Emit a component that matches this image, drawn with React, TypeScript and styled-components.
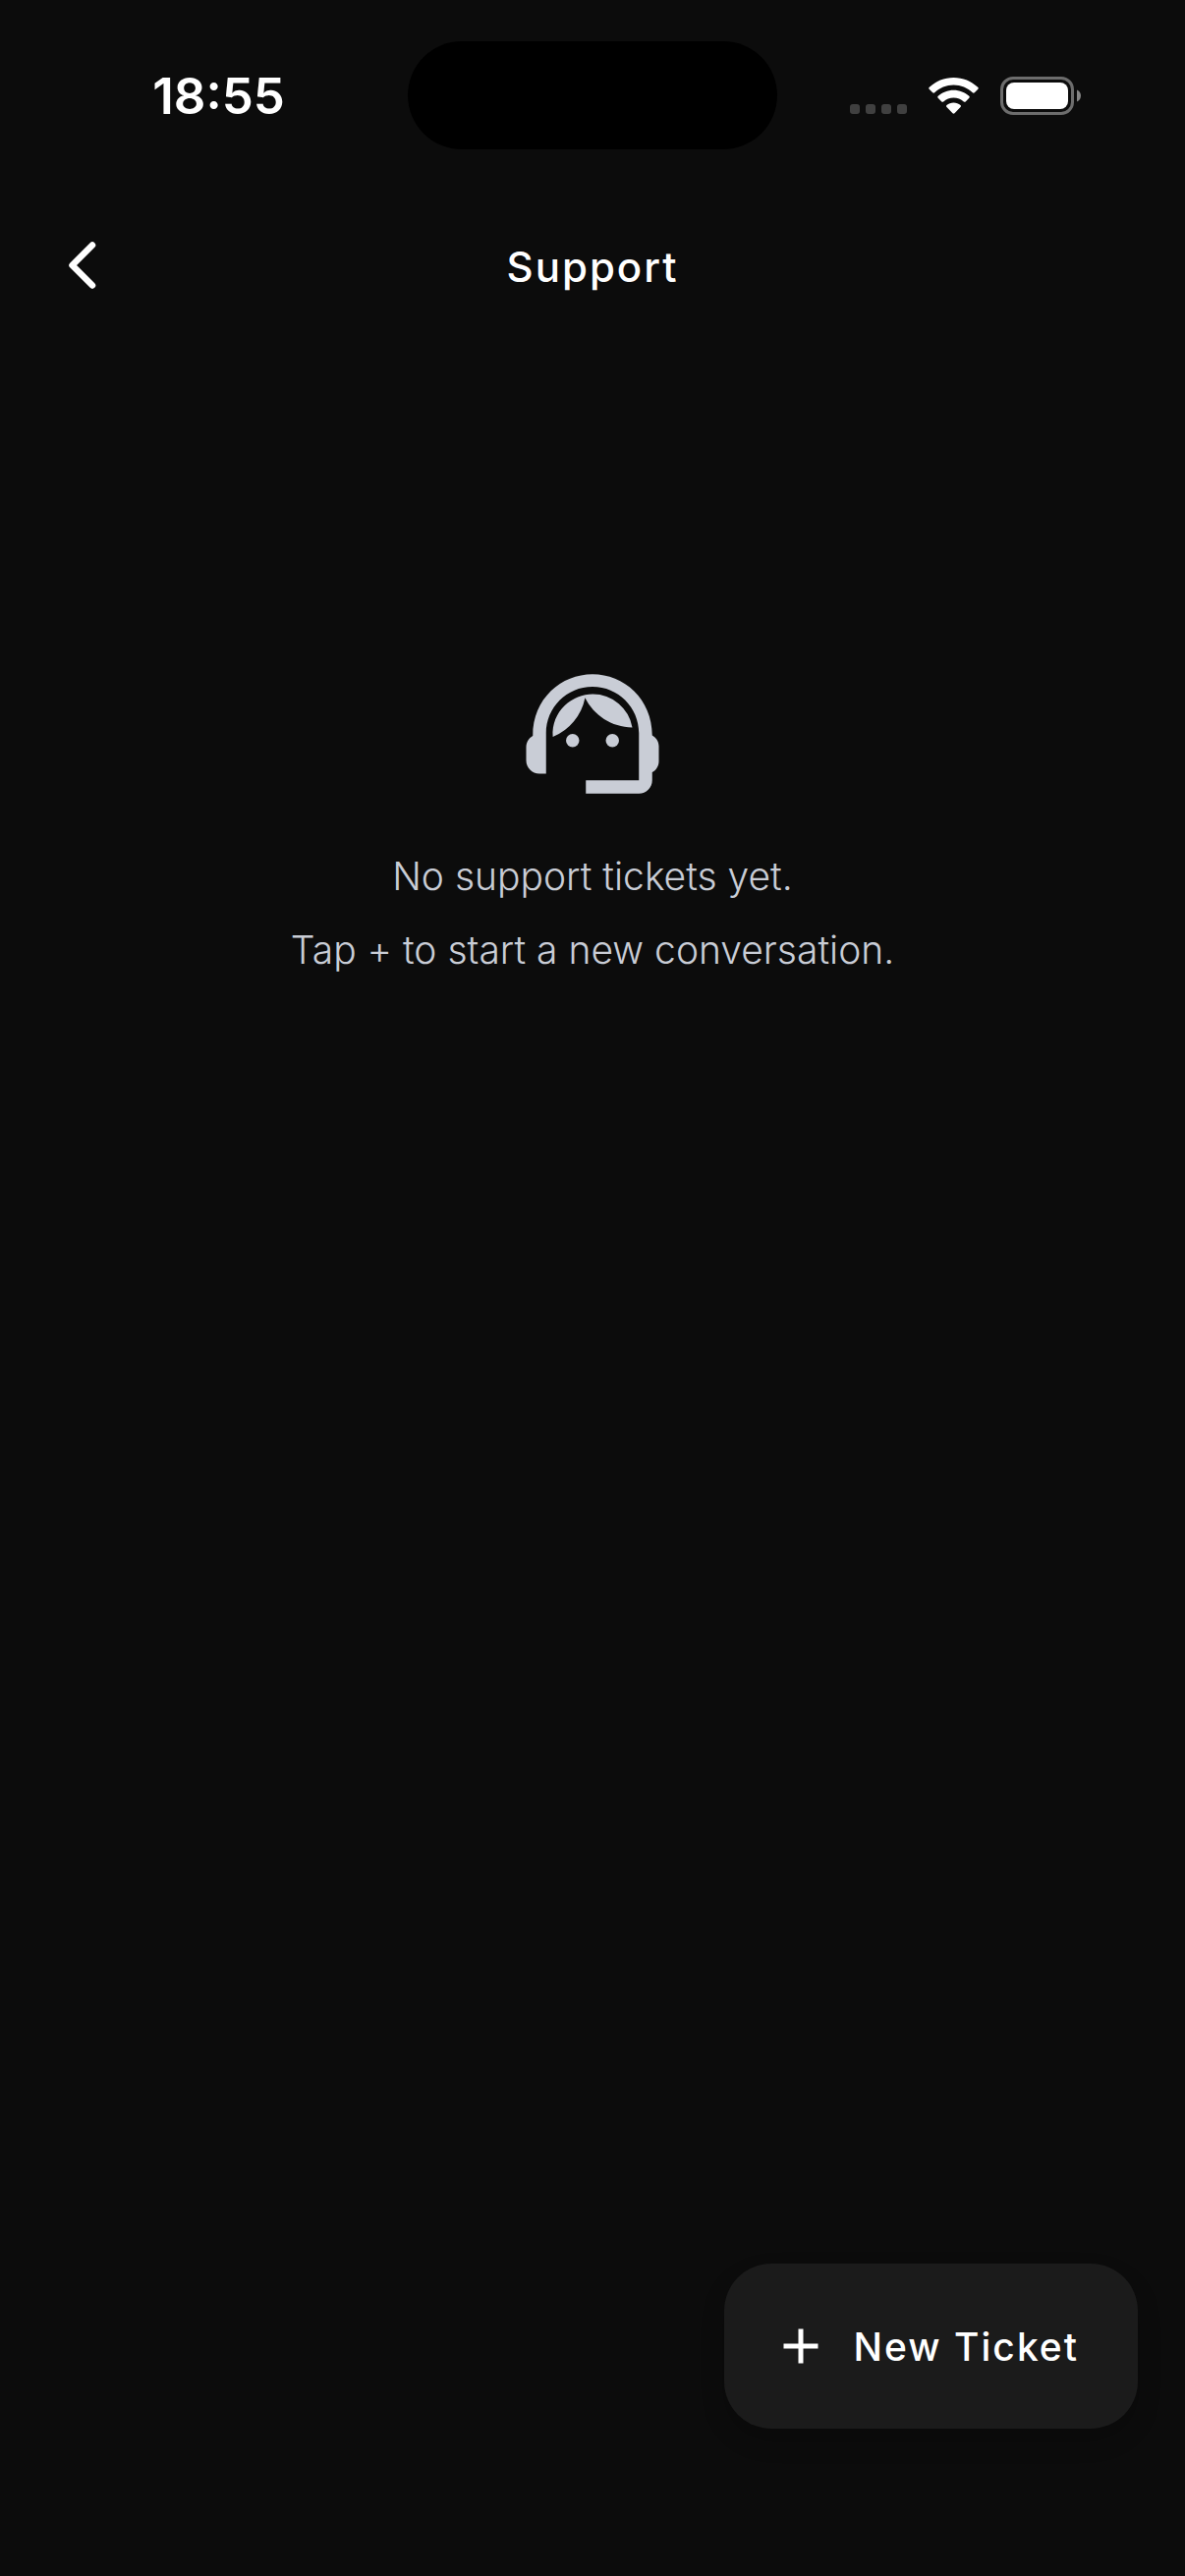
import React from 'react';
import styled, { createGlobalStyle } from 'styled-components';
import { MdAdd, MdSupportAgent } from 'react-icons/md';

const GlobalStyle = createGlobalStyle`
  * {
    box-sizing: border-box;
  }

  body {
    margin: 0;
    background: #0c0c0c;
    color: #ffffff;
    font-family: Inter, "Liberation Sans", sans-serif;
  }
`;

const Screen = styled.div`
  display: flex;
  flex-direction: column;
  min-height: 100vh;
`;

const StatusBar = styled.div`
  display: grid;
  grid-template-columns: 1fr 376px 1fr;
  align-items: center;
  height: 186px;
  padding-top: 8px;
`;

const Time = styled.time`
  padding-top: 2px;
  padding-left: 30px;
  font-size: 51px;
  font-weight: 600;
  line-height: 60px;
  text-align: center;
`;

const Island = styled.div`
  height: 110px;
  border-radius: 55px;
  background: #000000;
`;

const Indicators = styled.div`
  display: flex;
  align-items: center;
  justify-content: flex-end;
  gap: 22px;
  padding-right: 106px;
`;

const AppBar = styled.header`
  display: grid;
  grid-template-columns: 168px 1fr 168px;
  align-items: center;
  height: 168px;
`;

const BackButton = styled.button`
  display: flex;
  align-items: center;
  justify-content: center;
  width: 168px;
  height: 168px;
  padding: 0;
  border: 0;
  background: none;
  color: inherit;
  cursor: pointer;
`;

const Title = styled.h1`
  margin: 0;
  padding-top: 4px;
  font-size: 42px;
  font-weight: 450;
  line-height: 60px;
  letter-spacing: 2px;
  text-align: center;
`;

const Content = styled.main`
  display: flex;
  flex: 1;
  flex-direction: column;
  align-items: center;
  gap: 26px;
  padding: 312px 48px 48px;
  color: #c9cdd6;
`;

const Message = styled.p`
  margin: 0;
  font-size: 39px;
  font-weight: 300;
  line-height: 75px;
  text-align: center;
`;

const Footer = styled.footer`
  display: flex;
  justify-content: flex-end;
  padding: 0 48px 150px;
`;

const ActionButton = styled.button`
  display: flex;
  align-items: center;
  gap: 24px;
  height: 168px;
  padding: 0 60px 0 48px;
  border: 0;
  border-radius: 48px;
  background: #1b1b1b;
  box-shadow: 0 12px 24px rgba(0, 0, 0, 0.2);
  color: #ffffff;
  font-family: inherit;
  font-size: 39px;
  font-weight: 450;
  letter-spacing: 2px;
  cursor: pointer;
`;

const CellularDots = () => (
  <svg width="58" height="39" viewBox="0 0 58 39" fill="#404040" aria-hidden="true">
    {[0, 16, 32, 48].map((x) => (
      <rect key={x} x={x} y="28" width="10" height="10" rx="3" />
    ))}
  </svg>
);

const WifiIcon = () => (
  <svg width="51" height="39" viewBox="0 0 51 39" fill="#ffffff" aria-hidden="true">
    <path d="M25.500 1C35 1 43.700 4.700 50.200 10.800C50.900 11.400 50.900 12.200 50.300 12.800L46.800 16.300C46.200 16.900 45.400 16.900 44.800 16.300C39.700 11.500 32.900 8.600 25.500 8.600C18.100 8.600 11.300 11.500 6.200 16.300C5.600 16.900 4.800 16.900 4.200 16.300L0.700 12.800C0.100 12.200 0.100 11.400 0.800 10.800C7.300 4.700 16 1 25.500 1Z" />
    <path d="M25.500 13.700C31.600 13.700 37.100 16 41.300 19.800C41.900 20.400 41.900 21.200 41.300 21.800L37.700 25.400C37.100 26 36.400 26 35.800 25.400C33 22.900 29.400 21.400 25.500 21.400C21.600 21.400 18 22.900 15.200 25.400C14.600 26 13.900 26 13.300 25.400L9.700 21.800C9.100 21.200 9.100 20.400 9.700 19.800C13.900 16 19.400 13.700 25.500 13.700Z" />
    <path d="M25.500 26.500C28.200 26.500 30.600 27.500 32.500 29.100C33.100 29.700 33.100 30.400 32.500 31L26.500 37.300C25.900 37.900 25.100 37.900 24.500 37.300L18.500 31C17.900 30.400 17.900 29.700 18.500 29.100C20.400 27.500 22.800 26.500 25.500 26.500Z" />
  </svg>
);

const BatteryIcon = () => (
  <svg width="82" height="39" viewBox="0 0 82 39" aria-hidden="true">
    <rect x="1.500" y="1.500" width="72" height="36" rx="11.500" fill="none" stroke="#6d6d6d" strokeWidth="3" />
    <rect x="6" y="6" width="63" height="27" rx="8" fill="#ffffff" />
    <path d="M78 13.500C80.400 14.500 82 16.800 82 19.500C82 22.200 80.400 24.500 78 25.500Z" fill="#858585" />
  </svg>
);

const ChevronLeft = () => (
  <svg width="28" height="48" viewBox="0 0 28 48" fill="none" aria-hidden="true">
    <path d="M24 3.500L3.500 24L24 44.500" stroke="#ffffff" strokeWidth="6.500" strokeLinecap="round" strokeLinejoin="round" />
  </svg>
);

export default function App() {
  return (
    <>
      <GlobalStyle />
      <Screen>
        <StatusBar>
          <Time>18:55</Time>
          <Island />
          <Indicators>
            <CellularDots />
            <WifiIcon />
            <BatteryIcon />
          </Indicators>
        </StatusBar>
        <AppBar>
          <BackButton type="button" aria-label="Back">
            <ChevronLeft />
          </BackButton>
          <Title>Support</Title>
        </AppBar>
        <Content>
          <MdSupportAgent size={162} aria-hidden="true" />
          <Message>
            No support tickets yet.
            <br />
            Tap + to start a new conversation.
          </Message>
        </Content>
        <Footer>
          <ActionButton type="button">
            <MdAdd size={60} aria-hidden="true" />
            New Ticket
          </ActionButton>
        </Footer>
      </Screen>
    </>
  );
}
